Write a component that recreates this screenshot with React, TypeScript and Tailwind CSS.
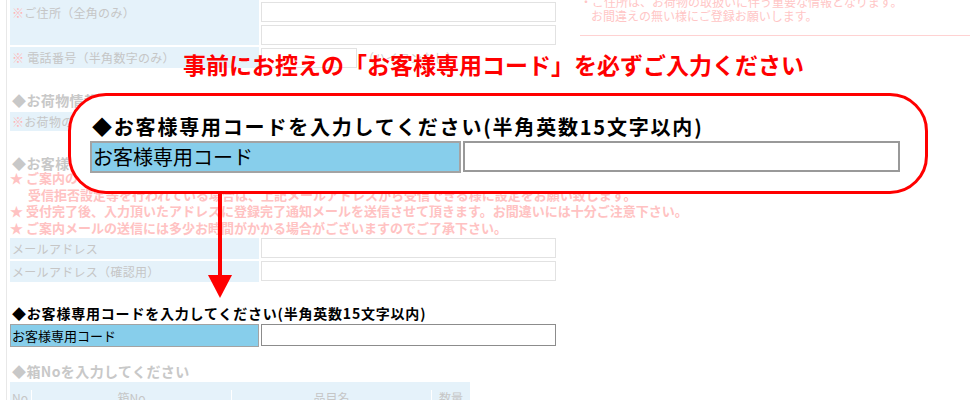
const fadedLabel = 'bg-[#e5f2fa] text-[12px] leading-[16px] tracking-[0.3px] text-[#c6c6c6] whitespace-nowrap';
const fadedInput = 'block w-full h-[20px] border border-[#e2e2e2] bg-white';
const fadedHead = 'text-[14px] font-bold tracking-[0.4px] text-[#c8c8c8] whitespace-nowrap';

function Req() {
  return <span className="text-[#ffb6b6]">※</span>;
}

function FormBackground() {
  return (
    <div className="ml-[6px] w-[551px] shrink-0 border-l border-[#e8e8e8] pl-[3px] pb-[40px]">
      {/* ご住所 */}
      <div className="grid grid-cols-[249px_295px] gap-x-[2px]">
        <div className={`${fadedLabel} h-[45px] pl-[2px] pt-[5px]`}>
          <Req />ご住所（全角のみ）
        </div>
        <div className="flex flex-col">
          <input readOnly className={`${fadedInput} mt-[2px]`} />
          <input readOnly className={`${fadedInput} mt-[3px]`} />
        </div>
      </div>

      {/* 電話番号 */}
      <div className="mt-[2px] grid grid-cols-[249px_295px] gap-x-[2px]">
        <div className={`${fadedLabel} h-[21px] pl-[2px] pt-[3px]`}>
          <Req /> 電話番号（半角数字のみ）
        </div>
        <div className="flex items-center gap-[5px]">
          <input readOnly className="block h-[20px] w-[96px] border border-[#e2e2e2] bg-white" />
          <span className="whitespace-nowrap text-[12px] text-[#d0d0d0]">（ハイフンなし）</span>
        </div>
      </div>

      {/* お荷物情報 */}
      <div className={`${fadedHead} mt-[23px] h-[18px] pl-[2px] leading-[18px]`}>◆お荷物情報</div>
      <div className="mt-[3px] grid grid-cols-[249px_295px] gap-x-[2px]">
        <div className={`${fadedLabel} h-[19px] pl-[2px] pt-[2px]`}>
          <Req />お荷物の個数
        </div>
        <input readOnly className={fadedInput} />
      </div>

      {/* メールアドレス */}
      <div className={`${fadedHead} mt-[24px] h-[14px] pl-[2px] leading-[14px]`}>◆お客様メールアドレス</div>
      <div className="whitespace-nowrap text-[13px] font-bold leading-[16.7px] text-[#ffc2c2]">
        <p>★ ご案内のメールは、こちらのアドレスより送信されます。</p>
        <p className="pl-[18px]">受信拒否設定等を行われている場合は、上記メールアドレスから受信できる様に設定をお願い致します。</p>
        <p>★ 受付完了後、入力頂いたアドレスに登録完了通知メールを送信させて頂きます。お間違いには十分ご注意下さい。</p>
        <p>★ ご案内メールの送信には多少お時間がかかる場合がございますのでご了承下さい。</p>
      </div>
      <div className="mt-[1px] grid grid-cols-[249px_295px] gap-x-[2px]">
        <div className={`${fadedLabel} h-[21px] pl-[2px] pt-[3px]`}>メールアドレス</div>
        <input readOnly className={fadedInput} />
      </div>
      <div className="mt-[2px] grid grid-cols-[249px_295px] gap-x-[2px]">
        <div className={`${fadedLabel} h-[21px] pl-[2px] pt-[3px]`}>メールアドレス（確認用）</div>
        <input readOnly className={fadedInput} />
      </div>

      {/* お客様専用コード (実物) */}
      <div className="mt-[22px] h-[18px] whitespace-nowrap pl-[2px] text-[14px] font-bold leading-[18px] tracking-[0.8px] text-black">
        ◆お客様専用コードを入力してください(半角英数15文字以内)
      </div>
      <div className="mt-[2px] grid grid-cols-[249px_295px] gap-x-[2px]">
        <div className="h-[23px] border border-[#a3a3a3] bg-[#87ceeb] pl-[1px] text-[13px] leading-[21px] text-black">
          お客様専用コード
        </div>
        <input readOnly className="block h-[22px] w-full border border-[#8c8c8c] bg-white" />
      </div>

      {/* 箱No */}
      <div className={`${fadedHead} mt-[15px] h-[18px] pl-[2px] leading-[18px]`}>◆箱Noを入力してください</div>
      <div className="mt-[2px] grid h-[30px] w-[460px] grid-cols-[22px_200px_200px_38px] bg-[#e5f2fa] pt-[8px] text-[12px] leading-[16px] text-[#c6c6c6]">
        <div className="border-r border-white pl-[2px]">No</div>
        <div className="border-r border-white text-center">箱No</div>
        <div className="border-r border-white text-center">品目名</div>
        <div className="text-center">数量</div>
      </div>
    </div>
  );
}

function SideNotes() {
  return (
    <div className="ml-[23px] flex-1">
      <div className="-mt-[5px] whitespace-nowrap text-[12px] leading-[14px] text-[#ffc6c6]">
        <p>・ご住所は、お荷物の取扱いに伴う重要な情報となります。</p>
        <p className="pl-[11px]">お間違えの無い様にご登録お願いします。</p>
      </div>
      <div className="mt-[12px] border-t border-[#ffd2d2]" />
    </div>
  );
}

function DownArrow() {
  return (
    <svg className="absolute left-[208px] top-[193px]" width="24" height="106" viewBox="0 0 24 106">
      <rect x="10" y="0" width="4" height="84" fill="#ff0000" />
      <polygon points="0,82 24,82 12,105" fill="#ff0000" />
    </svg>
  );
}

export default function App() {
  return (
    <div className="relative h-[400px] w-[970px] overflow-hidden bg-white font-['Noto_Sans_CJK_JP','Liberation_Sans',sans-serif]">
      <div className="flex">
        <FormBackground />
        <SideNotes />
      </div>

      {/* 注意書き */}
      <div className="absolute left-[183px] top-[50px] whitespace-nowrap text-[23px] font-bold leading-[28px] text-[#ff0000]">
        事前にお控えの「お客様専用コード」を必ずご入力ください
      </div>

      {/* 拡大表示 */}
      <div className="absolute left-[68px] top-[93px] h-[101px] w-[860px] rounded-[38px] border-[3px] border-[#ff0000] bg-white pl-[19px] pt-[17px]">
        <div className="h-[28px] whitespace-nowrap pl-[2px] text-[20px] font-bold leading-[28px] tracking-[1.8px] text-black">
          ◆お客様専用コードを入力してください(半角英数15文字以内)
        </div>
        <div className="flex gap-[2px]">
          <div className="h-[32px] w-[371px] border-2 border-[#a3a3a3] bg-[#87ceeb] pl-[1px] text-[20px] leading-[28px] text-black">
            お客様専用コード
          </div>
          <input readOnly className="block h-[31px] w-[437px] border-2 border-[#999999] bg-white" />
        </div>
      </div>

      <DownArrow />
    </div>
  );
}
